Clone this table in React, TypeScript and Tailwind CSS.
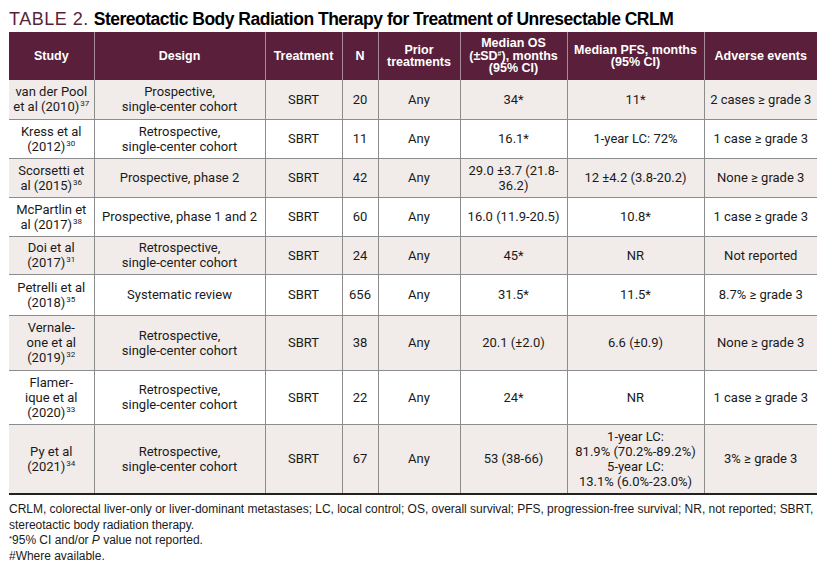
import React from "react";

type Row = {
  study: React.ReactNode;
  design: React.ReactNode;
  n: string;
  os: React.ReactNode;
  pfs: React.ReactNode;
  ae: string;
  h: string;
  shaded: boolean;
};

const Sup = ({ c }: { c: string }) => (
  <sup className="text-[8px] leading-none -top-[5px] ml-[1px]">{c}</sup>
);

const rows: Row[] = [
  { study: <>van der Pool<br />et al (2010)<Sup c="37" /></>, design: <>Prospective,<br />single-center cohort</>, n: "20", os: "34*", pfs: "11*", ae: "2 cases ≥ grade 3", h: "h-[39px]", shaded: true },
  { study: <>Kress et al<br />(2012)<Sup c="30" /></>, design: <>Retrospective,<br />single-center cohort</>, n: "11", os: "16.1*", pfs: "1-year LC: 72%", ae: "1 case ≥ grade 3", h: "h-[39px]", shaded: false },
  { study: <>Scorsetti et<br />al (2015)<Sup c="36" /></>, design: "Prospective, phase 2", n: "42", os: <>29.0 ±3.7 (21.8-<br />36.2)</>, pfs: "12 ±4.2 (3.8-20.2)", ae: "None ≥ grade 3", h: "h-[39px]", shaded: true },
  { study: <>McPartlin et<br />al (2017)<Sup c="38" /></>, design: "Prospective, phase 1 and 2", n: "60", os: "16.0 (11.9-20.5)", pfs: "10.8*", ae: "1 case ≥ grade 3", h: "h-[39px]", shaded: false },
  { study: <>Doi et al<br />(2017)<Sup c="31" /></>, design: <>Retrospective,<br />single-center cohort</>, n: "24", os: "45*", pfs: "NR", ae: "Not reported", h: "h-[38px]", shaded: true },
  { study: <>Petrelli et al<br />(2018)<Sup c="35" /></>, design: "Systematic review", n: "656", os: "31.5*", pfs: "11.5*", ae: "8.7% ≥ grade 3", h: "h-[41px]", shaded: false },
  { study: <>Vernale-<br />one et al<br />(2019)<Sup c="32" /></>, design: <>Retrospective,<br />single-center cohort</>, n: "38", os: "20.1 (±2.0)", pfs: "6.6 (±0.9)", ae: "None ≥ grade 3", h: "h-[55px]", shaded: true },
  { study: <>Flamer-<br />ique et al<br />(2020)<Sup c="33" /></>, design: <>Retrospective,<br />single-center cohort</>, n: "22", os: "24*", pfs: "NR", ae: "1 case ≥ grade 3", h: "h-[54px]", shaded: false },
  { study: <>Py et al<br />(2021)<Sup c="34" /></>, design: <>Retrospective,<br />single-center cohort</>, n: "67", os: "53 (38-66)", pfs: <>1-year LC:<br />81.9% (70.2%-89.2%)<br />5-year LC:<br />13.1% (6.0%-23.0%)</>, ae: "3% ≥ grade 3", h: "h-[70px]", shaded: true },
];

export default function App() {
  const td = "border-l border-[#8c8c8c] first:border-l-0 text-center align-middle px-1 leading-[15px]";
  const th = "border-l border-[#a88a98] first:border-l-0 text-center align-middle font-bold leading-[12.5px] px-1";
  return (
    <div className="w-[833px] h-[565px] bg-white overflow-hidden text-[#1a1a1a]" style={{ fontFamily: "Roboto, 'Liberation Sans', sans-serif" }}>
      <div className="pl-[9px] pt-[6px] h-[32px] flex items-baseline whitespace-nowrap">
        <span className="text-[#5a1f3a] text-[18px] tracking-[0.5px] mr-[5px]" style={{ fontFamily: "'Liberation Sans', sans-serif" }}>TABLE 2.</span>
        <span className="text-[17.5px] font-bold tracking-[-0.5px] text-black" style={{ fontFamily: "'Liberation Sans', sans-serif" }}>Stereotactic Body Radiation Therapy for Treatment of Unresectable CRLM</span>
      </div>
      <table className="ml-[9px] w-[808px] table-fixed border-collapse text-[13px]">
        <colgroup>
          <col className="w-[85px]" />
          <col className="w-[171px]" />
          <col className="w-[77px]" />
          <col className="w-[36px]" />
          <col className="w-[82px]" />
          <col className="w-[107px]" />
          <col className="w-[137px]" />
          <col className="w-[113px]" />
        </colgroup>
        <thead>
          <tr className="h-[48px] bg-[#5a1f3a] text-white text-[12.5px]" style={{ fontFamily: "'Liberation Sans', sans-serif" }}>
            <th className={th}>Study</th>
            <th className={th}>Design</th>
            <th className={th}>Treatment</th>
            <th className={th}>N</th>
            <th className={th}>Prior<br />treatments</th>
            <th className={th}>Median OS<br />(±SD<sup className="text-[7px] -top-[4px]">#</sup>), months<br />(95% CI)</th>
            <th className={th}>Median PFS, months<br />(95% CI)</th>
            <th className={th}>Adverse events</th>
          </tr>
        </thead>
        <tbody>
          {rows.map((r, i) => (
            <tr
              key={i}
              className={`${r.h} ${r.shaded ? "bg-[#f1ecea]" : "bg-white"} ${i === rows.length - 1 ? "border-b-2 border-b-[#222]" : "border-b border-b-[#8c8c8c]"}`}
            >
              <td className={td}>{r.study}</td>
              <td className={td}>{r.design}</td>
              <td className={td}>SBRT</td>
              <td className={td}>{r.n}</td>
              <td className={td}>Any</td>
              <td className={td}>{r.os}</td>
              <td className={td}>{r.pfs}</td>
              <td className={td}>{r.ae}</td>
            </tr>
          ))}
        </tbody>
      </table>
      <div className="pl-[9px] pt-[7px] text-[12px] tracking-[-0.02px] leading-[15.5px] text-[#1a1a1a] whitespace-nowrap" style={{ fontFamily: "'Liberation Sans', sans-serif" }}>
        <div>CRLM, colorectal liver-only or liver-dominant metastases; LC, local control; OS, overall survival; PFS, progression-free survival; NR, not reported; SBRT,</div>
        <div>stereotactic body radiation therapy.</div>
        <div><sup className="text-[8px] -top-[3px]">*</sup>95% CI and/or <i>P</i> value not reported.</div>
        <div>#Where available.</div>
      </div>
    </div>
  );
}
